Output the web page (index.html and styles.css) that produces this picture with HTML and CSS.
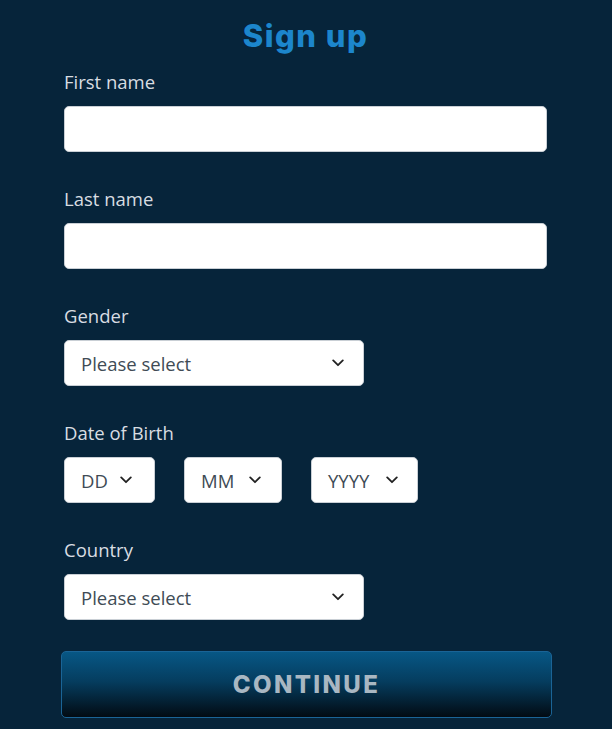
FILE: index.html
```html
<!DOCTYPE html>
<html lang="en">
<head>
<meta charset="utf-8">
<title>Sign up</title>
<link rel="stylesheet" href="styles.css">
</head>
<body>
<main class="signup">
  <h1 class="title">Sign up</h1>
  <form class="form">
    <div class="field">
      <label class="label" for="first">First name</label>
      <input class="text-input" id="first" type="text">
    </div>
    <div class="field">
      <label class="label" for="last">Last name</label>
      <input class="text-input" id="last" type="text">
    </div>
    <div class="field">
      <div class="label">Gender</div>
      <div class="select select-wide" role="combobox">
        <span class="select-value">Please select</span>
        <svg class="chevron" viewBox="0 0 12 8" width="12" height="8"><path d="M1.2 1.4 6 6.2 10.8 1.4" fill="none" stroke="#222" stroke-width="1.8" stroke-linecap="round" stroke-linejoin="round"/></svg>
      </div>
    </div>
    <div class="field">
      <div class="label">Date of Birth</div>
      <div class="dob">
        <div class="select select-dd" role="combobox">
          <span class="select-value">DD</span>
          <svg class="chevron" viewBox="0 0 12 8" width="12" height="8"><path d="M1.2 1.4 6 6.2 10.8 1.4" fill="none" stroke="#222" stroke-width="1.8" stroke-linecap="round" stroke-linejoin="round"/></svg>
        </div>
        <div class="select select-mm" role="combobox">
          <span class="select-value">MM</span>
          <svg class="chevron" viewBox="0 0 12 8" width="12" height="8"><path d="M1.2 1.4 6 6.2 10.8 1.4" fill="none" stroke="#222" stroke-width="1.8" stroke-linecap="round" stroke-linejoin="round"/></svg>
        </div>
        <div class="select select-yyyy" role="combobox">
          <span class="select-value">YYYY</span>
          <svg class="chevron" viewBox="0 0 12 8" width="12" height="8"><path d="M1.2 1.4 6 6.2 10.8 1.4" fill="none" stroke="#222" stroke-width="1.8" stroke-linecap="round" stroke-linejoin="round"/></svg>
        </div>
      </div>
    </div>
    <div class="field">
      <div class="label">Country</div>
      <div class="select select-wide" role="combobox">
        <span class="select-value">Please select</span>
        <svg class="chevron" viewBox="0 0 12 8" width="12" height="8"><path d="M1.2 1.4 6 6.2 10.8 1.4" fill="none" stroke="#222" stroke-width="1.8" stroke-linecap="round" stroke-linejoin="round"/></svg>
      </div>
    </div>
    <button class="continue" type="button">CONTINUE</button>
  </form>
</main>
</body>
</html>
```
FILE: styles.css
```css
html, body {
  margin: 0;
  padding: 0;
  background: #06243a;
}
body {
  font-family: "Open Sans", "Noto Sans", sans-serif;
  height: 729px;
  overflow: hidden;
}
.signup {
  padding: 18px 0 0 64px;
  width: 483px;
}
.title {
  margin: 0;
  text-align: center;
  font-family: "Inter", "Liberation Sans", sans-serif;
  font-weight: 800;
  font-size: 31px;
  line-height: 36px;
  letter-spacing: 1.5px;
  color: #1c86cc;
}
.form {
  display: flex;
  flex-direction: column;
  margin-top: 16px;
}
.field {
  display: flex;
  flex-direction: column;
  align-items: flex-start;
  margin-bottom: 35px;
}
.field:last-of-type {
  margin-bottom: 31px;
}
.label {
  display: block;
  font-size: 18.5px;
  line-height: 24px;
  color: #d8dde2;
  margin-bottom: 12px;
}
.text-input {
  box-sizing: border-box;
  width: 483px;
  height: 46px;
  margin: 0;
  border: 1px solid #c9cfd5;
  border-radius: 5px;
  background: #fff;
  padding: 0 16px;
  font: inherit;
}
.select {
  box-sizing: border-box;
  height: 46px;
  background: #fff;
  border: 1px solid #c9cfd5;
  border-radius: 5px;
  display: flex;
  align-items: center;
  justify-content: space-between;
  padding: 0 20px 0 16px;
  color: #404b55;
  font-size: 18.5px;
}
.select-wide {
  width: 300px;
  padding-right: 19px;
}
.select-dd {
  width: 91px;
  padding-right: 22px;
}
.select-mm {
  width: 98px;
}
.select-yyyy {
  width: 107px;
  padding-right: 19px;
}
.chevron {
  flex: none;
}
.dob {
  display: flex;
  gap: 29px;
}
.continue {
  box-sizing: border-box;
  width: 491px;
  height: 67px;
  margin-left: -3px;
  border: 1px solid #1a6496;
  border-radius: 5px;
  background: linear-gradient(to bottom, #075785 0%, #053d5f 45%, #020b13 100%);
  color: #a9b7c2;
  font-family: "Inter", "Liberation Sans", sans-serif;
  font-weight: 800;
  font-size: 24px;
  letter-spacing: 2.4px;
  cursor: pointer;
}
```
